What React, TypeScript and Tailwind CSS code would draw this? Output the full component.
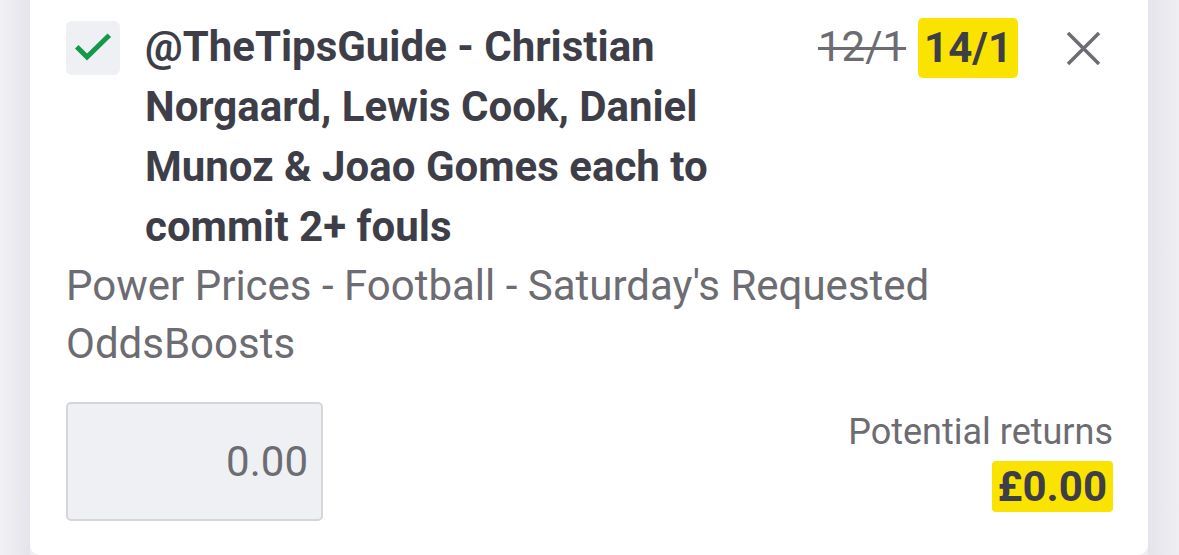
import React from 'react';

export default function App() {
  return <div className="w-[1179px] h-[555px] bg-[#efeff3] flex overflow-hidden" style={{ fontFamily: 'Roboto, "Liberation Sans", sans-serif' }}>
      {/* Left gutter */}
      <div className="w-[30px] h-full bg-gradient-to-r from-[#f1f1f5] to-[#e4e4ea]" />
      {/* Bet card */}
      <div className="w-[1118px] h-full bg-white rounded-b-[10px] pl-[36px] pr-[35px] pt-[17px] flex flex-col">
        <div className="flex items-start">
          <div className="w-[54px] h-[54px] mt-[4px] rounded-[6px] bg-[#eff0f4] shrink-0">
            <svg width="54" height="54" viewBox="0 0 54 54" fill="none" stroke="#14994a" strokeWidth="5" strokeLinecap="square">
              <path d="M12.5 27.5l8.5 8.5L41.5 16" />
            </svg>
          </div>
          <h2 className="ml-[25px] w-[620px] text-[42px] leading-[60px] font-bold text-[#3e3e48]">
            @TheTipsGuide - Christian Norgaard, Lewis Cook, Daniel Munoz &amp; Joao Gomes each to commit 2+ fouls
          </h2>
          <div className="ml-auto flex items-start">
            <span className="text-[42px] leading-[60px] text-[#6c6c72] line-through decoration-[3px]">12/1</span>
            <span className="ml-[12px] mt-[1px] h-[60px] px-[6px] rounded-[5px] bg-[#fbe300] text-[42px] leading-[60px] font-bold text-[#3e3e48]">14/1</span>
            <div className="ml-[48px] mr-[12px] mt-[15px]">
              <svg width="35" height="33" viewBox="0 0 35 33" fill="none" stroke="#6c6c72" strokeWidth="3.5">
                <path d="M2 1l31 31M33 1L2 32" />
              </svg>
            </div>
          </div>
        </div>
        <p className="text-[42px] leading-[58px] text-[#6c6c72]">
          Power Prices - Football - Saturday's Requested OddsBoosts
        </p>
        <div className="mt-[29px] flex items-start justify-between">
          <div className="w-[257px] h-[119px] rounded-[5px] border-2 border-[#d5d5da] bg-[#eff0f4] flex items-center justify-end pr-[13px]">
            <span className="text-[42px] text-[#6c6c72]">0.00</span>
          </div>
          <div className="flex flex-col items-end">
            <span className="text-[36px] leading-[60px] text-[#6c6c72]">Potential returns</span>
            <span className="-mt-[1px] h-[51px] px-[6px] rounded-[4px] bg-[#fbe300] text-[42px] leading-[51px] font-bold text-[#3e3e48]">£0.00</span>
          </div>
        </div>
      </div>
      {/* Right gutter */}
      <div className="flex-1 h-full bg-gradient-to-r from-[#e4e4ea] to-[#efeff3]" />
    </div>;
}
